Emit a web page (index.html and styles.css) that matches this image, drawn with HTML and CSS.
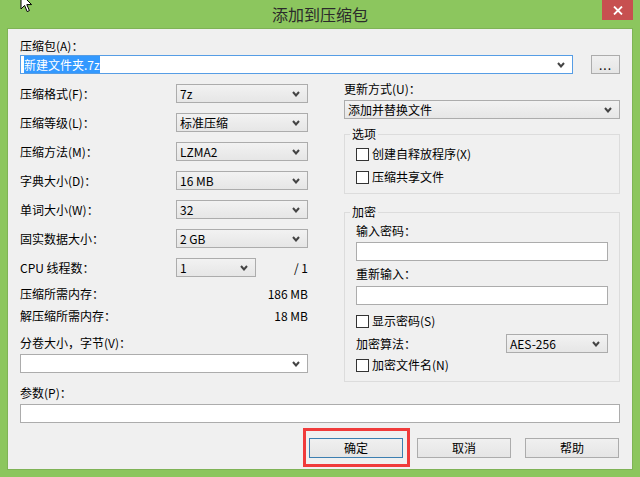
FILE: index.html
```html
<!DOCTYPE html>
<html>

<head>
    <meta charset="utf-8">
    <title>添加到压缩包</title>
    <link rel="stylesheet" href="styles.css">
</head>

<body>
    <div class="window">
        <div class="titlebar">
            <span class="title">添加到压缩包</span>
            <div class="close">
                <svg width="10" height="9" viewBox="0 0 10 9"><path d="M1 0.5 L9 8.5 M9 0.5 L1 8.5" stroke="#fff" stroke-width="1.8" /></svg>
            </div>
        </div>

        <!-- mouse pointer -->
        <svg class="cursor" width="14" height="21" viewBox="0 0 14 21"><path d="M1 1 L1 16 L4.6 12.4 L7.2 18.6 L9.4 17.6 L6.8 11.6 L11.6 11.6 Z" fill="#fff" stroke="#000" stroke-width="1" /></svg>

        <div class="client">
            <div class="label">压缩包(A)：</div>
            <div class="archive-row">
                <div class="combo edit focus archive">
                    <span class="val"><span class="sel">新建文件夹.7z</span></span>
                    <svg class="chev" width="8" height="6" viewBox="0 0 8 6"><path d="M1 1 L4 4.5 L7 1" fill="none" stroke="#444" stroke-width="2" /></svg>
                </div>
                <div class="btn dots">...</div>
            </div>

            <div class="main">
                <div class="left">
                    <div class="row">
                        <span>压缩格式(F)：</span>
                        <div class="combo list w132"><span class="val">7z</span><svg class="chev" width="8" height="6" viewBox="0 0 8 6"><path d="M1 1 L4 4.5 L7 1" fill="none" stroke="#444" stroke-width="2" /></svg></div>
                    </div>
                    <div class="row">
                        <span>压缩等级(L)：</span>
                        <div class="combo list w132"><span class="val">标准压缩</span><svg class="chev" width="8" height="6" viewBox="0 0 8 6"><path d="M1 1 L4 4.5 L7 1" fill="none" stroke="#444" stroke-width="2" /></svg></div>
                    </div>
                    <div class="row">
                        <span>压缩方法(M)：</span>
                        <div class="combo list w132"><span class="val">LZMA2</span><svg class="chev" width="8" height="6" viewBox="0 0 8 6"><path d="M1 1 L4 4.5 L7 1" fill="none" stroke="#444" stroke-width="2" /></svg></div>
                    </div>
                    <div class="row">
                        <span>字典大小(D)：</span>
                        <div class="combo list w132"><span class="val">16 MB</span><svg class="chev" width="8" height="6" viewBox="0 0 8 6"><path d="M1 1 L4 4.5 L7 1" fill="none" stroke="#444" stroke-width="2" /></svg></div>
                    </div>
                    <div class="row">
                        <span>单词大小(W)：</span>
                        <div class="combo list w132"><span class="val">32</span><svg class="chev" width="8" height="6" viewBox="0 0 8 6"><path d="M1 1 L4 4.5 L7 1" fill="none" stroke="#444" stroke-width="2" /></svg></div>
                    </div>
                    <div class="row">
                        <span>固实数据大小：</span>
                        <div class="combo list w132"><span class="val">2 GB</span><svg class="chev" width="8" height="6" viewBox="0 0 8 6"><path d="M1 1 L4 4.5 L7 1" fill="none" stroke="#444" stroke-width="2" /></svg></div>
                    </div>
                    <div class="row">
                        <span>CPU 线程数：</span>
                        <div class="cpu">
                            <div class="combo list w80"><span class="val">1</span><svg class="chev" width="8" height="6" viewBox="0 0 8 6"><path d="M1 1 L4 4.5 L7 1" fill="none" stroke="#444" stroke-width="2" /></svg></div>
                            <span>/ 1</span>
                        </div>
                    </div>
                    <div class="mem mem1"><span>压缩所需内存：</span><span>186 MB</span></div>
                    <div class="mem mem2"><span>解压缩所需内存：</span><span>18 MB</span></div>
                    <div class="label vol-label">分卷大小，字节(V)：</div>
                    <div class="combo edit vol"><span class="val"></span><svg class="chev" width="8" height="6" viewBox="0 0 8 6"><path d="M1 1 L4 4.5 L7 1" fill="none" stroke="#444" stroke-width="2" /></svg></div>
                </div>

                <div class="right">
                    <div class="label">更新方式(U)：</div>
                    <div class="combo list update"><span class="val">添加并替换文件</span><svg class="chev" width="8" height="6" viewBox="0 0 8 6"><path d="M1 1 L4 4.5 L7 1" fill="none" stroke="#444" stroke-width="2" /></svg></div>

                    <fieldset class="group options">
                        <legend>选项</legend>
                        <label class="check"><span class="box"></span>创建自释放程序(X)</label>
                        <label class="check second"><span class="box"></span>压缩共享文件</label>
                    </fieldset>

                    <fieldset class="group crypt">
                        <legend>加密</legend>
                        <div class="label">输入密码：</div>
                        <div class="edit-box pw"></div>
                        <div class="label re-label">重新输入：</div>
                        <div class="edit-box pw pw2"></div>
                        <label class="check show"><span class="box"></span>显示密码(S)</label>
                        <div class="algo">
                            <span>加密算法：</span>
                            <div class="combo list w102"><span class="val">AES-256</span><svg class="chev" width="8" height="6" viewBox="0 0 8 6"><path d="M1 1 L4 4.5 L7 1" fill="none" stroke="#444" stroke-width="2" /></svg></div>
                        </div>
                        <label class="check names"><span class="box"></span>加密文件名(N)</label>
                    </fieldset>
                </div>
            </div>

            <div class="label params-label">参数(P)：</div>
            <div class="edit-box params"></div>

            <div class="buttons">
                <div class="btn default">确定</div>
                <div class="btn">取消</div>
                <div class="btn">帮助</div>
            </div>
        </div>
    </div>
</body>

</html>
```

FILE: styles.css
```css
* {
    box-sizing: border-box;
}

body {
    margin: 0;
    width: 640px;
    height: 477px;
    overflow: hidden;
    background-color: #8cc65e;
    font-family: "Noto Sans CJK SC", "Noto Sans", sans-serif;
    font-size: 12px;
    line-height: 14px;
    color: #000;
}

.window {
    position: relative;
    height: 477px;
    display: flex;
    flex-direction: column;
}

.titlebar {
    height: 29px;
    display: grid;
    grid-template-columns: 1fr auto 1fr;
}

.title {
    grid-column: 2;
    line-height: 29px;
    font-size: 16px;
    color: #2b2b2b;
}

.close {
    grid-column: 3;
    justify-self: end;
    width: 31px;
    height: 20px;
    margin-right: 7px;
    background-color: #c75050;
    display: flex;
    align-items: center;
    justify-content: center;
}

.cursor {
    position: absolute;
    left: 20px;
    top: -7px;
}

.client {
    flex: 1;
    margin: 0 8px 8px;
    padding: 10px 12px 11px;
    background-color: #f0f0f0;
    box-shadow: 0 0 0 1px #7fb356;
    display: flex;
    flex-direction: column;
}

/* controls */
.combo {
    height: 19px;
    border: 1px solid #acacac;
    background: linear-gradient(#f2f2f2, #e6e6e6);
    display: flex;
    align-items: center;
    padding: 0 7px 0 3px;
}

.combo .val {
    flex: 1;
    white-space: nowrap;
}

.combo.edit {
    background: #fff;
}

.combo.focus {
    border-color: #569de5;
}

.chev {
    display: block;
}

.sel {
    background-color: #3399ff;
    color: #fff;
}

.edit-box {
    height: 19px;
    border: 1px solid #acacac;
    background-color: #fff;
}

.btn {
    height: 20px;
    border: 1px solid #acacac;
    background: linear-gradient(#f0f0f0, #e5e5e5);
    display: flex;
    align-items: center;
    justify-content: center;
}

.check {
    display: flex;
    align-items: center;
    gap: 3px;
    height: 14px;
}

.box {
    width: 13px;
    height: 13px;
    border: 1px solid #333;
    background-color: #fff;
}

/* archive row */
.archive-row {
    display: flex;
    margin-top: 2px;
}

.archive {
    width: 553px;
}

.dots {
    width: 29px;
    height: 19px;
    margin-left: auto;
    letter-spacing: 1px;
}

/* two columns */
.main {
    display: grid;
    grid-template-columns: 288px 276px;
    gap: 36px;
    margin-top: 8px;
}

.left {
    padding-top: 2px;
}

.row {
    display: flex;
    justify-content: space-between;
    align-items: center;
    height: 19px;
    margin-bottom: 10px;
}

.w132 {
    width: 132px;
}

.w80 {
    width: 80px;
}

.w102 {
    width: 102px;
}

.cpu {
    width: 132px;
    display: flex;
    justify-content: space-between;
    align-items: center;
}

.mem {
    display: flex;
    justify-content: space-between;
}

.mem1 {
    margin-top: 5px;
}

.mem2 {
    margin-top: 8px;
}

.vol-label {
    margin-top: 13px;
}

.vol {
    margin-top: 4px;
}

.update {
    margin-top: 4px;
}

.group {
    margin: 0;
    border: 1px solid #dcdcdc;
    padding: 6px 11px 9px;
}

.group legend {
    padding: 0 2px;
    margin-left: -6px;
    line-height: 14px;
}

.options {
    margin-top: 8px;
}

.options .second {
    margin-top: 9px;
}

.crypt {
    margin-top: 11px;
    padding-top: 5px;
}

.crypt .pw {
    margin-top: 4px;
}

.crypt .re-label {
    margin-top: 6px;
}

.crypt .pw2 {
    margin-top: 5px;
}

.crypt .show {
    margin-top: 9px;
}

.algo {
    display: flex;
    justify-content: space-between;
    align-items: center;
    margin-top: 6px;
}

.crypt .names {
    margin-top: 5px;
}

.params-label {
    margin-top: 4px;
}

.params {
    margin-top: 4px;
}

.buttons {
    display: flex;
    justify-content: flex-end;
    gap: 14px;
    margin-top: 15px;
    padding-right: 1px;
}

.buttons .btn {
    width: 94px;
}

.btn.default {
    border-color: #3c7fb1;
    position: relative;
}

/* red highlight frame */
.btn.default::after {
    content: "";
    position: absolute;
    top: -11px;
    left: -7px;
    right: -8px;
    bottom: -10px;
    border: 3px solid #f03b3b;
}
```
